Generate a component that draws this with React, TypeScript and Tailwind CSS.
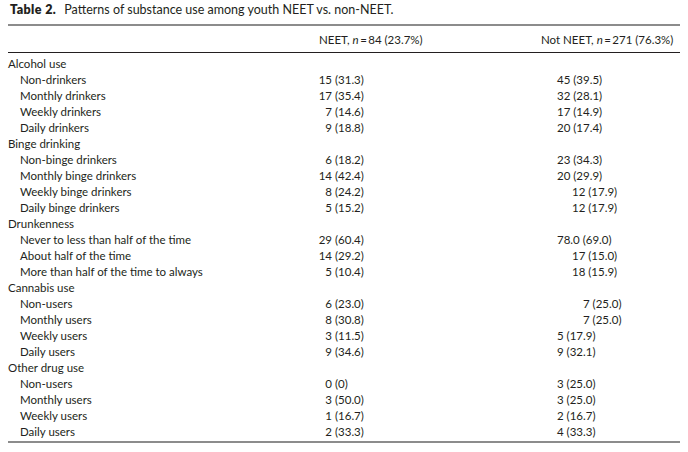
import React from "react";

type Row = { label: string; sub?: boolean; a?: [string, string]; b?: string; off?: number };

const rows: Row[] = [
  { label: "Alcohol use" },
  { label: "Non-drinkers", sub: true, a: ["15", "(31.3)"], b: "45 (39.5)" },
  { label: "Monthly drinkers", sub: true, a: ["17", "(35.4)"], b: "32 (28.1)" },
  { label: "Weekly drinkers", sub: true, a: ["7", "(14.6)"], b: "17 (14.9)" },
  { label: "Daily drinkers", sub: true, a: ["9", "(18.8)"], b: "20 (17.4)" },
  { label: "Binge drinking" },
  { label: "Non-binge drinkers", sub: true, a: ["6", "(18.2)"], b: "23 (34.3)" },
  { label: "Monthly binge drinkers", sub: true, a: ["14", "(42.4)"], b: "20 (29.9)" },
  { label: "Weekly binge drinkers", sub: true, a: ["8", "(24.2)"], b: "12 (17.9)", off: 1 },
  { label: "Daily binge drinkers", sub: true, a: ["5", "(15.2)"], b: "12 (17.9)", off: 1 },
  { label: "Drunkenness" },
  { label: "Never to less than half of the time", sub: true, a: ["29", "(60.4)"], b: "78.0 (69.0)" },
  { label: "About half of the time", sub: true, a: ["14", "(29.2)"], b: "17 (15.0)", off: 1 },
  { label: "More than half of the time to always", sub: true, a: ["5", "(10.4)"], b: "18 (15.9)", off: 1 },
  { label: "Cannabis use" },
  { label: "Non-users", sub: true, a: ["6", "(23.0)"], b: "7 (25.0)", off: 2 },
  { label: "Monthly users", sub: true, a: ["8", "(30.8)"], b: "7 (25.0)", off: 2 },
  { label: "Weekly users", sub: true, a: ["3", "(11.5)"], b: "5 (17.9)" },
  { label: "Daily users", sub: true, a: ["9", "(34.6)"], b: "9 (32.1)" },
  { label: "Other drug use" },
  { label: "Non-users", sub: true, a: ["0", "(0)"], b: "3 (25.0)" },
  { label: "Monthly users", sub: true, a: ["3", "(50.0)"], b: "3 (25.0)" },
  { label: "Weekly users", sub: true, a: ["1", "(16.7)"], b: "2 (16.7)" },
  { label: "Daily users", sub: true, a: ["2", "(33.3)"], b: "4 (33.3)" },
];

function Val({ v }: { v?: [string, string] }) {
  if (!v) return <div />;
  return (
    <div className="flex">
      <span className="w-[13px] whitespace-nowrap flex justify-end">{v[0]}</span>
      <span className="ml-[3px] whitespace-nowrap">{v[1]}</span>
    </div>
  );
}

function Val2({ v, off }: { v?: string; off?: number }) {
  if (!v) return <div />;
  const cls = off === 2 ? "pl-[26px]" : off === 1 ? "pl-[15px]" : "pl-0";
  return <div className={`${cls} whitespace-nowrap`}>{v}</div>;
}

export default function App() {
  return (
    <div
      className="w-[688px] h-[452px] bg-white px-2 text-[11.5px] text-[#231f20] overflow-hidden"
      style={{ fontFamily: "Lato, 'Open Sans', sans-serif" }}
    >
      <div className="h-[24px] pt-[1px] pl-[2px] leading-[17px] whitespace-nowrap flex items-baseline">
        <span className="font-extrabold text-[12.5px] tracking-[0.4px]">Table 2.</span>
        <span className="ml-[8px] text-[12.5px]">Patterns of substance use among youth NEET vs. non-NEET.</span>
      </div>
      <div className="h-[2px] bg-[#8c8c8c]" />
      <div className="grid grid-cols-[311px_238px_1fr] h-[26px] items-center leading-[16px] pt-[2px]">
        <div />
        <div className="whitespace-nowrap">
          NEET, <span className="italic">n</span>{"\u2009=\u2009"}84 (23.7%)
        </div>
        <div className="whitespace-nowrap -ml-[16px]">
          Not NEET, <span className="italic">n</span>{"\u2009=\u2009"}271 (76.3%)
        </div>
      </div>
      <div className="h-px bg-[#231f20]" />
      <div className="pt-[3px]">
        {rows.map((r, i) => (
          <div key={i} className="grid grid-cols-[311px_238px_1fr] h-[16px] items-center leading-[16px]">
            <div className={r.sub ? "pl-3 whitespace-nowrap" : "whitespace-nowrap"}>{r.label}</div>
            <Val v={r.a} />
            <Val2 v={r.b} off={r.off} />
          </div>
        ))}
      </div>
      <div className="mt-[1px] h-[2px] bg-[#8c8c8c]" />
    </div>
  );
}
